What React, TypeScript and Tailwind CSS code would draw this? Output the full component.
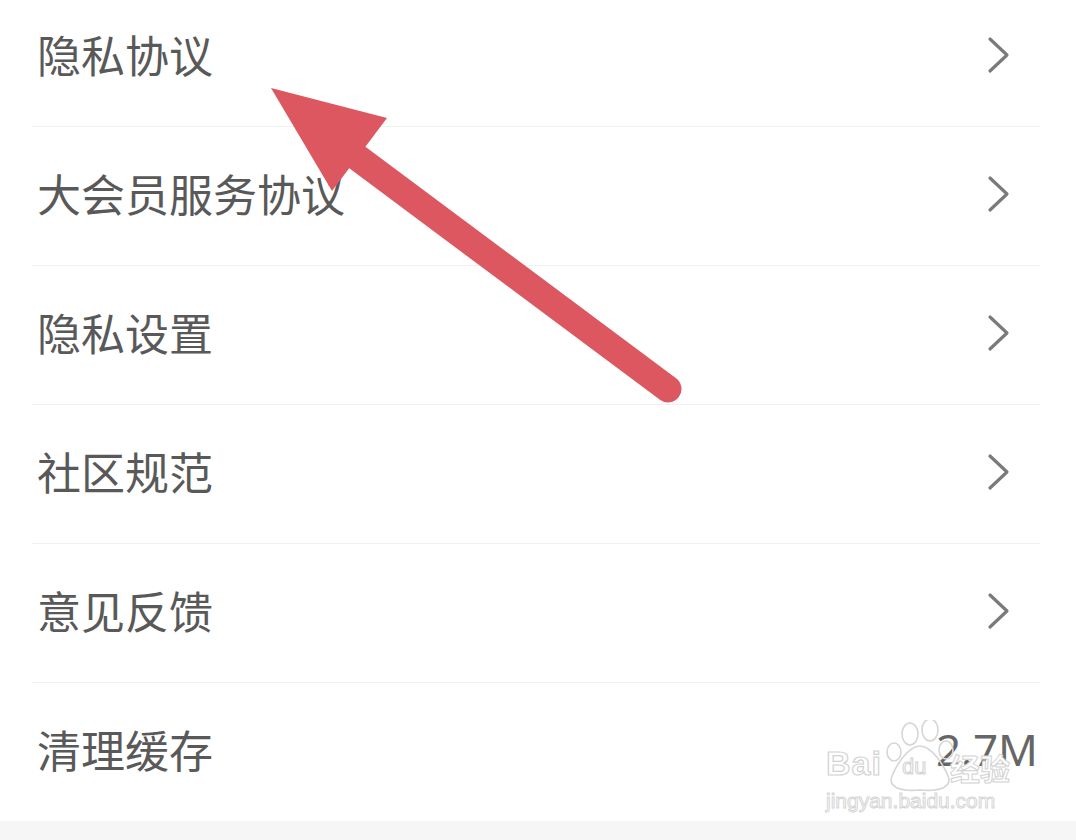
const rows = [
  { label: "隐私协议", arrow: true },
  { label: "大会员服务协议", arrow: true },
  { label: "隐私设置", arrow: true },
  { label: "社区规范", arrow: true },
  { label: "意见反馈", arrow: true },
];

function Chevron() {
  return (
    <svg width="24" height="38" viewBox="0 0 24 38" className="mr-[29px] mb-[4px]">
      <path
        d="M3 3 L20 19 L3 35"
        fill="none"
        stroke="#7a7a7a"
        strokeWidth="3.2"
        strokeLinecap="round"
        strokeLinejoin="round"
      />
    </svg>
  );
}

function Watermark() {
  return (
    <div className="absolute left-[822px] top-[720px] w-[200px] h-[98px] pointer-events-none select-none">
      <svg width="200" height="98" viewBox="0 0 200 98" className="absolute inset-0">
        <g fill="none" stroke="#d6d6d6" strokeWidth="1.6">
          <ellipse cx="88" cy="14" rx="8" ry="11" />
          <ellipse cx="108" cy="10" rx="8" ry="11" />
          <ellipse cx="72" cy="32" rx="7" ry="9" />
          <ellipse cx="124" cy="30" rx="7" ry="9" />
          <path d="M98 26 C86 26 74 46 70 56 C66 66 76 72 98 70 C120 72 130 66 126 56 C122 46 110 26 98 26 Z" />
        </g>
      </svg>
      <span className="absolute left-[4px] top-[26px] text-[34px] leading-none font-bold text-white [-webkit-text-stroke:1.2px_#d2d2d2] font-['Liberation_Sans',sans-serif] tracking-[1px]">
        Bai
      </span>
      <span className="absolute left-[80px] top-[36px] text-[22px] leading-none text-white [-webkit-text-stroke:1px_#d2d2d2] font-['Liberation_Sans',sans-serif]">
        du
      </span>
      <span className="absolute left-[128px] top-[32px] text-[30px] leading-none font-bold text-white [-webkit-text-stroke:1px_#d2d2d2] font-['Noto_Sans_CJK_SC',sans-serif]">
        经验
      </span>
      <span className="absolute left-[4px] top-[70px] text-[21px] leading-none text-white [-webkit-text-stroke:1px_#d6d6d6] font-['Liberation_Sans',sans-serif]">
        jingyan.baidu.com
      </span>
    </div>
  );
}

export default function App() {
  return (
    <div className="relative w-[1076px] h-[840px] overflow-hidden bg-white font-['Noto_Sans_CJK_SC','Noto_Sans',sans-serif]">
      <div className="flex flex-col h-full">
        <div className="mt-[-12px] ml-[32px] mr-[36px]">
          {rows.map((r) => (
            <div
              key={r.label}
              className="h-[139px] flex items-center justify-between border-b border-[#f0f0f0]"
            >
              <span className="pl-[5px] pb-[6px] text-[44px] leading-none text-[#595959]">
                {r.label}
              </span>
              {r.arrow && <Chevron />}
            </div>
          ))}
          <div className="h-[138px] flex items-center justify-between">
            <span className="pl-[5px] pb-[6px] text-[44px] leading-none text-[#595959]">
              清理缓存
            </span>
            <span className="pr-[2px] pb-[6px] text-[44px] leading-none text-[#666666] font-['Noto_Sans',sans-serif]">
              2.7M
            </span>
          </div>
        </div>
        <div className="flex-1 bg-[#f6f6f6]" />
      </div>

      <Watermark />

      {/* red annotation arrow */}
      <svg
        width="1076"
        height="840"
        viewBox="0 0 1076 840"
        className="absolute inset-0 pointer-events-none"
      >
        <line
          x1="350"
          y1="152"
          x2="668"
          y2="389"
          stroke="#dc5760"
          strokeWidth="27"
          strokeLinecap="round"
        />
        <polygon points="271,88 387,118 332,191" fill="#dc5760" />
      </svg>
    </div>
  );
}
